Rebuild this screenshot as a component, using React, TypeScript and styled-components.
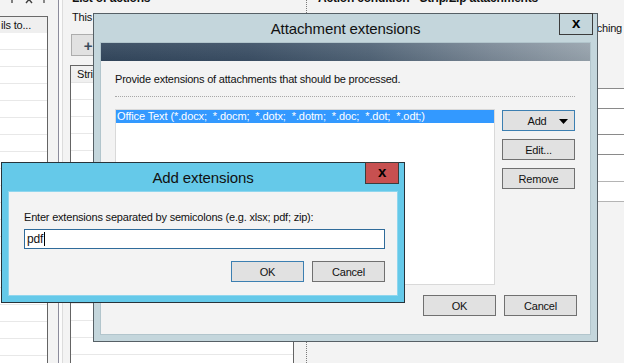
import React from 'react';
import styled, { createGlobalStyle } from 'styled-components';

const GlobalStyle = createGlobalStyle`
  html, body { margin: 0; padding: 0; background: #f3f3f3; }
  body {
    font-family: "Liberation Sans", Arial, sans-serif;
    font-size: 11px;
    letter-spacing: -0.2px;
    color: #111;
  }
  * { box-sizing: border-box; }
`;

const Screen = styled.div`
  position: relative;
  width: 624px;
  height: 363px;
  overflow: hidden;
  background: #f3f3f3;
`;

const Workspace = styled.div`
  display: flex;
  height: 100%;
`;

/* ---------- left panel ---------- */
const LeftPanel = styled.div`
  width: 58px;
  flex: none;
  display: flex;
  flex-direction: column;
`;

const IconRow = styled.div`
  height: 22px;
  margin-top: -6px;
  display: flex;
  align-items: flex-start;
  gap: 8px;
  padding-left: 7px;
  color: #3c3c3c;
`;

const SideList = styled.div`
  width: 48px;
  flex: 1;
  background: #fff;
  border-top: 1px solid #6a6a6a;
  border-right: 1px solid #646464;
  overflow: hidden;
`;

const SideHeader = styled.div`
  height: 16px;
  line-height: 16px;
  background: #efefef;
  padding-left: 1px;
  white-space: nowrap;
`;

const Row = styled.div<{ $h?: number }>`
  height: ${(p) => p.$h ?? 17}px;
  border-bottom: 1px solid #e8e8e8;
`;

const Splitter = styled.div`
  width: 5px;
  flex: none;
  background: #fbfbfb;
  border-left: 1px solid #8b8b9b;
  border-right: 1px solid #dcdcdc;
`;

/* ---------- middle panel ---------- */
const MiddlePanel = styled.div`
  width: 243px;
  flex: none;
  display: flex;
  flex-direction: column;
  padding: 0 12px 0 7px;
`;

const Heading = styled.div`
  margin-top: -9px;
  height: 14px;
  line-height: 14px;
  font-weight: bold;
  font-size: 12px;
  white-space: nowrap;
  padding-left: 2px;
`;

const Desc = styled.div`
  margin-top: 5px;
  height: 14px;
  line-height: 14px;
  white-space: nowrap;
  padding-left: 2px;
`;

const PlusButton = styled.div`
  margin: 10px 0 0 1px;
  width: 34px;
  height: 22px;
  background: #e1e1e1;
  border: 1px solid #adadad;
  display: flex;
  align-items: center;
  justify-content: center;
  font-weight: bold;
  font-size: 15px;
  color: #3a4b5c;
`;

const StripList = styled.div`
  margin-top: 9px;
  flex: 1;
  background: #fff;
  border: 1px solid #646464;
  border-bottom: none;
  overflow: hidden;
`;

const StripHeader = styled.div`
  height: 17px;
  line-height: 17px;
  background: #f0f0f0;
  padding-left: 6px;
  border-bottom: 1px solid #e4e4e4;
  white-space: nowrap;
`;

const DottedSeparator = styled.div`
  width: 1px;
  flex: none;
  border-left: 1px dotted #7a7a7a;
`;

/* ---------- right panel ---------- */
const RightPanel = styled.div`
  flex: 1;
  display: flex;
  flex-direction: column;
  padding-left: 9px;
  overflow: hidden;
`;

const RightLabel = styled.div`
  margin-top: 16px;
  height: 14px;
  line-height: 14px;
  text-align: right;
  padding-right: 2px;
  white-space: nowrap;
`;

const FieldGrid = styled.div`
  margin-top: 53px;
  background: #fff;
  border-top: 1px solid #8a8a8a;
  margin-right: -4px;
`;

const FieldRow = styled.div<{ $h: number; $light?: boolean }>`
  height: ${(p) => p.$h}px;
  border-bottom: 1px solid ${(p) => (p.$light ? '#b4b4b4' : '#8a8a8a')};
`;

/* ---------- dialogs ---------- */
const Dialog = styled.div<{ $x: number; $y: number; $w: number; $h: number; $frame: string; $edge: string }>`
  position: absolute;
  left: ${(p) => p.$x}px;
  top: ${(p) => p.$y}px;
  width: ${(p) => p.$w}px;
  height: ${(p) => p.$h}px;
  background: ${(p) => p.$frame};
  border: 1px solid ${(p) => p.$edge};
  display: flex;
  flex-direction: column;
  padding: 0 7px 7px 7px;
`;

const TitleBar = styled.div`
  height: 29px;
  flex: none;
  display: flex;
  align-items: center;
  justify-content: center;
  font-size: 15px;
  letter-spacing: -0.1px;
  color: #111;
`;

const CloseButton = styled.div<{ $bg: string; $right: number }>`
  position: absolute;
  top: -1px;
  right: ${(p) => p.$right}px;
  width: 34px;
  height: 22px;
  background: ${(p) => p.$bg};
  border: 1px solid #3c3c3c;
  display: flex;
  align-items: center;
  justify-content: center;
  font-weight: bold;
  font-size: 15px;
  line-height: 1;
  color: #000;
  padding-bottom: 3px;
`;

const Client = styled.div<{ $edge: string }>`
  flex: 1;
  background: #f3f3f3;
  box-shadow: 0 0 0 1px ${(p) => p.$edge};
  display: flex;
  flex-direction: column;
`;

const Banner = styled.div`
  height: 18px;
  flex: none;
  background:
    linear-gradient(to bottom, rgba(255, 255, 255, 0.07), rgba(0, 0, 0, 0.04)),
    linear-gradient(to right, #33475d 0%, #3b4f65 30%, #516477 55%, #7b8997 80%, #97a3ad 100%);
`;

const Instruction = styled.div`
  margin: 11px 0 0 14px;
  height: 14px;
  line-height: 14px;
  white-space: nowrap;
`;

const DottedRule = styled.div`
  margin: 10px 15px 0 14px;
  border-top: 1px dotted #a8a8a8;
`;

const ListArea = styled.div`
  display: flex;
  margin: 12px 0 0 14px;
  gap: 7px;
`;

const ExtList = styled.div`
  width: 380px;
  height: 176px;
  background: #fff;
  border: 1px solid #d9d9d9;
`;

const ListItem = styled.div<{ $selected?: boolean }>`
  height: 13px;
  line-height: 13px;
  padding-left: 1px;
  white-space: nowrap;
  letter-spacing: -0.1px;
  background: ${(p) => (p.$selected ? '#3399ff' : 'transparent')};
  color: ${(p) => (p.$selected ? '#fff' : '#111')};
`;

const ButtonColumn = styled.div`
  display: flex;
  flex-direction: column;
  gap: 8px;
  margin-top: 1px;
`;

const Button = styled.div<{ $focused?: boolean }>`
  position: relative;
  width: 73px;
  height: 21px;
  background: #e1e1e1;
  border: 1px solid ${(p) => (p.$focused ? '#3c7fb1' : '#707070')};
  display: flex;
  align-items: center;
  justify-content: center;
  white-space: nowrap;
`;

const DropArrow = styled.svg`
  position: absolute;
  right: 6px;
  top: 8px;
`;

const Footer = styled.div<{ $top: number; $right: number }>`
  display: flex;
  justify-content: flex-end;
  gap: 8px;
  margin-top: ${(p) => p.$top}px;
  padding-right: ${(p) => p.$right}px;
`;

const AddClient = styled(Client)`
  padding: 18px 12px 0 15px;
`;

const PromptLabel = styled.div`
  height: 14px;
  line-height: 14px;
  white-space: nowrap;
`;

const TextBox = styled.div`
  margin-top: 5px;
  height: 20px;
  background: #fff;
  border: 1px solid #2f6b9a;
  display: flex;
  align-items: center;
  padding-left: 2px;
  font-size: 12px;
`;

const Caret = styled.span`
  display: inline-block;
  width: 1px;
  height: 14px;
  background: #000;
  margin-left: 1px;
`;

export default function App() {
  return (
    <Screen>
      <GlobalStyle />
      <Workspace>
        <LeftPanel>
          <IconRow>
            <svg width="10" height="10" viewBox="0 0 10 10">
              <path d="M2 1h6M3 1v4h4V1M5 5v4" stroke="#404040" strokeWidth="1.3" fill="none" />
            </svg>
            <svg width="8" height="10" viewBox="0 0 8 10">
              <path d="M1 2l6 7M7 2L1 9" stroke="#404040" strokeWidth="1.4" />
            </svg>
            <svg width="6" height="10" viewBox="0 0 6 10">
              <path d="M3 2v7" stroke="#404040" strokeWidth="1.2" />
            </svg>
          </IconRow>
          <SideList>
            <SideHeader>ils to...</SideHeader>
            {Array.from({ length: 20 }).map((_, i) => (
              <Row key={i} />
            ))}
          </SideList>
        </LeftPanel>
        <Splitter />
        <MiddlePanel>
          <Heading>List of actions</Heading>
          <Desc>This action list runs the following actions</Desc>
          <PlusButton>+</PlusButton>
          <StripList>
            <StripHeader>Strip/Zip attachments</StripHeader>
            {Array.from({ length: 20 }).map((_, i) => (
              <Row key={i} />
            ))}
          </StripList>
        </MiddlePanel>
        <DottedSeparator />
        <RightPanel>
          <Heading>Action condition - Strip/Zip attachments</Heading>
          <RightLabel>Strip or zip only attachments matching</RightLabel>
          <FieldGrid>
            <FieldRow $h={20} />
            <FieldRow $h={26} />
            <FieldRow $h={20} />
            <FieldRow $h={27} $light />
            <FieldRow $h={20} $light />
          </FieldGrid>
        </RightPanel>
      </Workspace>

      <Dialog $x={93} $y={13} $w={505} $h={329} $frame="#c4d6dc" $edge="#566066">
        <TitleBar>Attachment extensions</TitleBar>
        <CloseButton $bg="#c4d6dc" $right={4}>x</CloseButton>
        <Client $edge="#b2c5cc">
          <Banner />
          <Instruction>Provide extensions of attachments that should be processed.</Instruction>
          <DottedRule />
          <ListArea>
            <ExtList>
              <ListItem $selected>
                Office Text (*.docx;&nbsp; *.docm;&nbsp; *.dotx;&nbsp; *.dotm;&nbsp; *.doc;&nbsp; *.dot;&nbsp; *.odt;)
              </ListItem>
            </ExtList>
            <ButtonColumn>
              <Button $focused>
                <span style={{ marginRight: 3 }}>Add</span>
                <DropArrow width="9" height="5" viewBox="0 0 9 5">
                  <path d="M0 0h9L4.5 5z" fill="#000" />
                </DropArrow>
              </Button>
              <Button>Edit...</Button>
              <Button>Remove</Button>
            </ButtonColumn>
          </ListArea>
          <Footer $top={10} $right={13}>
            <Button>OK</Button>
            <Button>Cancel</Button>
          </Footer>
        </Client>
      </Dialog>

      <Dialog $x={1} $y={162} $w={404} $h={141} $frame="#65c9e9" $edge="#27333a">
        <TitleBar>Add extensions</TitleBar>
        <CloseButton $bg="#c75050" $right={5}>x</CloseButton>
        <AddClient $edge="#8fd6ee">
          <PromptLabel>Enter extensions separated by semicolons (e.g. xlsx; pdf; zip):</PromptLabel>
          <TextBox>
            pdf
            <Caret />
          </TextBox>
          <Footer $top={12} $right={0}>
            <Button $focused>OK</Button>
            <Button>Cancel</Button>
          </Footer>
        </AddClient>
      </Dialog>
    </Screen>
  );
}
